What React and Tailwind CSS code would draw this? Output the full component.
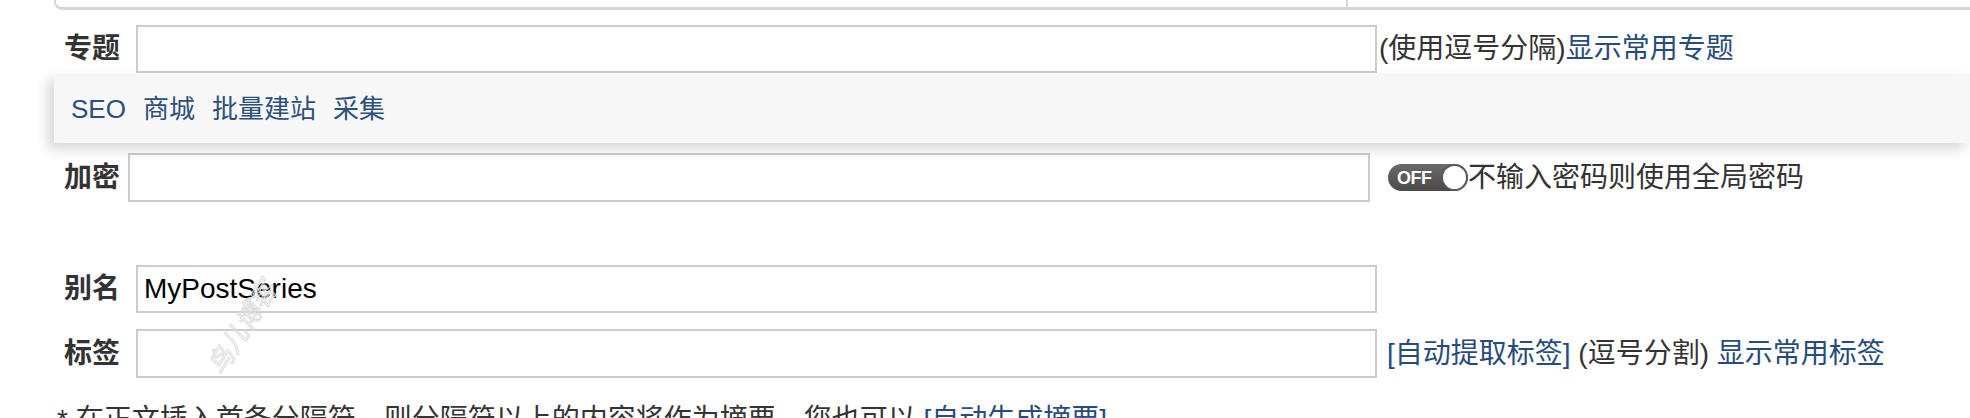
import React from "react";

function Toggle() {
  return (
    <div className="relative flex h-[27px] w-[80px] items-center rounded-full bg-gradient-to-b from-[#6a6a6a] to-[#4a4a4a]">
      <span className="pl-[9px] text-[18px] font-bold leading-none tracking-[-0.5px] text-white">OFF</span>
      <div className="absolute right-0 top-0 h-[27px] w-[27px] rounded-full border-2 border-[#5a5a5a] bg-white" />
    </div>
  );
}

export default function App() {
  return (
    <div className="relative h-[418px] w-[1970px] overflow-hidden bg-white font-['Liberation_Sans','Noto_Sans_CJK_SC',sans-serif] text-[#333]">
      {/* top box (cut off) */}
      <div className="ml-[54px] flex h-[10px] rounded-bl-[8px] border-b-[3px] border-l-2 border-[#d6d6d6]">
        <div className="w-[1292px] border-r-2 border-[#d6d6d6]" />
        <div className="flex-1" />
      </div>

      {/* 专题 */}
      <div className="mt-[15px] flex h-[48px] items-center pl-[64px]">
        <div className="w-[72px] text-[28px] font-bold leading-none">专题</div>
        <div className="h-[48px] w-[1241px] border-2 border-[#cccccc] bg-white" />
        <div className="ml-[2px] whitespace-nowrap text-[28px] leading-none">
          (使用逗号分隔)<span className="text-[#274b7c]">显示常用专题</span>
        </div>
      </div>

      {/* dropdown */}
      <div className="relative z-10 ml-[54px] mt-[1px] flex h-[69px] items-center gap-[17px] bg-[#f7f7f7] pl-[17px] text-[26px] leading-none text-[#2c4f7c] shadow-[-6px_6px_12px_rgba(0,0,0,0.16)]">
        <span>SEO</span>
        <span>商城</span>
        <span>批量建站</span>
        <span>采集</span>
      </div>

      {/* 加密 */}
      <div className="mt-[10px] flex h-[49px] items-center pl-[64px]">
        <div className="w-[64px] text-[28px] font-bold leading-none">加密</div>
        <div className="h-[49px] w-[1242px] border-2 border-[#cccccc] bg-white" />
        <div className="ml-[18px]">
          <Toggle />
        </div>
        <div className="whitespace-nowrap text-[28px] leading-none">不输入密码则使用全局密码</div>
      </div>

      {/* 别名 */}
      <div className="mt-[63px] flex h-[48px] items-center pl-[64px]">
        <div className="w-[72px] text-[28px] font-bold leading-none">别名</div>
        <div className="flex h-[48px] w-[1241px] items-center border-2 border-[#cccccc] bg-white pl-[6px] text-[28px] text-black">
          MyPostSeries
        </div>
      </div>

      {/* 标签 */}
      <div className="mt-[16px] flex h-[49px] items-center pl-[64px]">
        <div className="w-[72px] text-[28px] font-bold leading-none">标签</div>
        <div className="h-[49px] w-[1241px] border-2 border-[#cccccc] bg-white" />
        <div className="ml-[10px] whitespace-nowrap text-[28px] leading-none">
          <span className="text-[#274b7c]">[自动提取标签]</span> (逗号分割) <span className="text-[#274b7c]">显示常用标签</span>
        </div>
      </div>

      {/* bottom note */}
      <div className="mt-[22px] whitespace-nowrap pl-[57px] text-[28px] leading-[40px]">
        * 在正文插入首条分隔符，则分隔符以上的内容将作为摘要，您也可以 <span className="text-[#274b7c]">[自动生成摘要]</span>
      </div>

      {/* watermark */}
      <div className="pointer-events-none absolute left-[190px] top-[315px] -rotate-[58deg] whitespace-nowrap text-[26px] italic leading-none text-transparent [-webkit-text-stroke:1px_#dddddd]">
        鸟儿博客
      </div>
    </div>
  );
}
